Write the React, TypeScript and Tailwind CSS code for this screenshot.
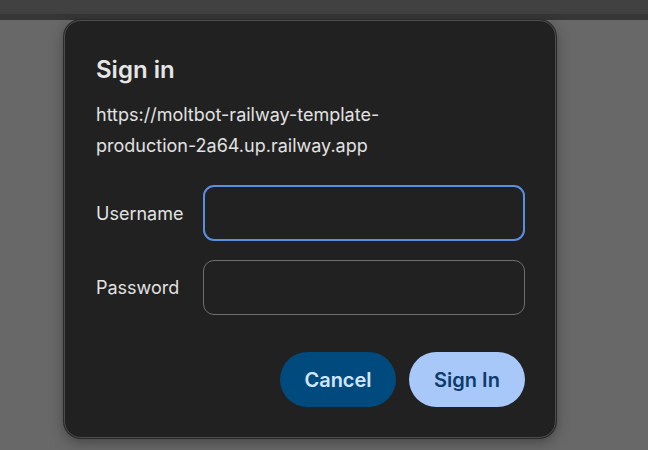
export default function App() {
  return (
    <div
      className="w-[648px] h-[450px] bg-[#686868] flex flex-col overflow-hidden"
      style={{ fontFamily: "Inter, 'Noto Sans', sans-serif" }}
    >
      <div className="h-[14px] bg-[#414141] shrink-0" />
      <div className="h-[6px] bg-[#363636] shrink-0" />
      <div className="pl-[64px]">
        <div className="w-[492px] h-[418px] rounded-[17px] bg-[#212121] border border-[#4c4c4c] shadow-[0_0_0_1px_#2a2a2a,0_4px_14px_rgba(0,0,0,0.35)] flex flex-col pl-[31px] pr-[30px] pt-[34px]">
          <h1 className="text-[24px] leading-[30px] font-semibold text-[#e6e6e6]">Sign in</h1>
          <p className="mt-[14px] text-[18px] leading-[31px] text-[#e2e2e2]">
            https://moltbot-railway-template-
            <br />
            production-2a64.up.railway.app
          </p>
          <div className="mt-[24px] flex items-center">
            <label className="w-[107px] text-[18px] text-[#e2e2e2]">Username</label>
            <div className="flex-1 h-[56px] rounded-[11px] border-2 border-[#5c8ee0] bg-[#212121]" />
          </div>
          <div className="mt-[19px] flex items-center">
            <label className="w-[107px] text-[18px] text-[#e2e2e2]">Password</label>
            <div className="flex-1 h-[55px] rounded-[11px] border border-[#6e6e6e] bg-[#212121]" />
          </div>
          <div className="mt-[37px] flex justify-end gap-[13px]">
            <button className="w-[116px] h-[55px] rounded-full bg-[#004a7e] text-[#d2e6ff] text-[20px] font-semibold">
              Cancel
            </button>
            <button className="w-[116px] h-[55px] rounded-full bg-[#a9c8fa] text-[#0d3b6b] text-[20px] font-semibold">
              Sign In
            </button>
          </div>
        </div>
      </div>
    </div>
  );
}
